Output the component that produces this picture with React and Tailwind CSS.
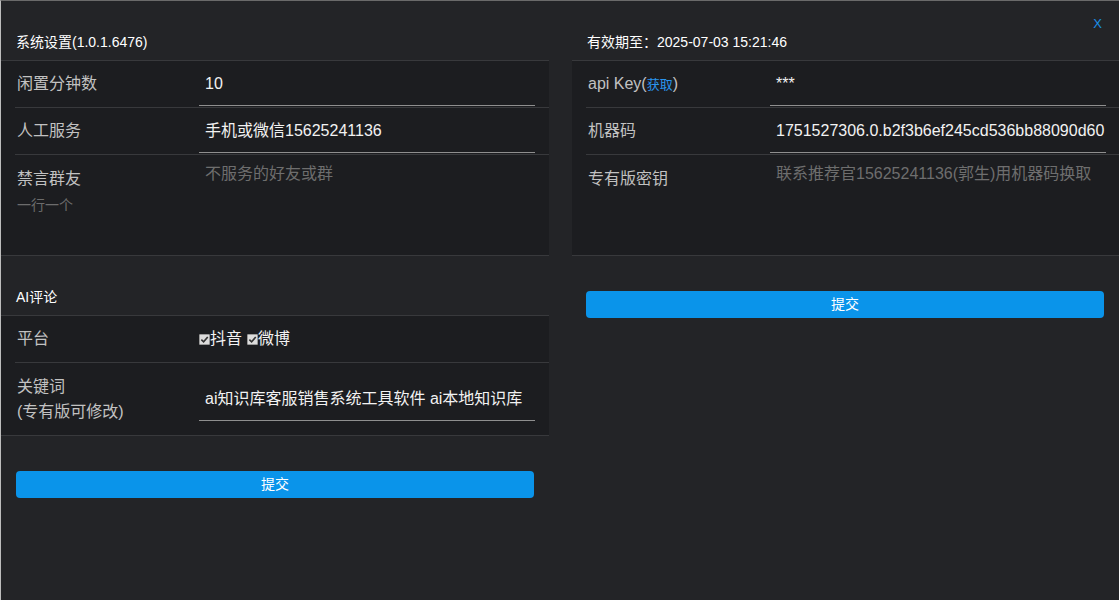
import React from "react";

const FONT = { fontFamily: '"Liberation Sans", "Noto Sans CJK SC", sans-serif' };

function Check() {
  return (
    <span className="inline-flex h-[11px] w-[11px] shrink-0 items-center justify-center rounded-[1px] border border-[#9a9a9a] bg-[#dcdcdc]">
      <svg viewBox="0 0 10 10" className="h-[9px] w-[9px]">
        <path d="M1.5 5.2 L4 7.6 L8.6 2.2" fill="none" stroke="#333" strokeWidth="1.8" />
      </svg>
    </span>
  );
}

function Row({ label, children, last, h = "h-[47px]" }) {
  return (
    <div className={`ml-[14px] flex items-center ${h} ${last ? "" : "border-b border-[#38393c]"}`}>
      <div className="w-[184px] shrink-0 pl-[2px] text-[16px] leading-[24px] text-[#c2c2c2]">{label}</div>
      {children}
    </div>
  );
}

function Input({ children }) {
  return (
    <div className="mr-[15px] flex h-[44px] w-[336px] shrink-0 items-center overflow-hidden whitespace-nowrap border-b border-[#8f8f8f] pl-[6px] text-[16px] text-[#f2f2f2]">
      {children}
    </div>
  );
}

function Header({ children }) {
  return (
    <div className="flex h-[59px] items-end pb-[9px] pl-[15px] text-[14px] leading-[17px] text-white">
      {children}
    </div>
  );
}

export default function App() {
  return (
    <div
      style={FONT}
      className="flex h-[600px] w-[1119px] overflow-hidden border-l border-t border-l-[#bdbdbd] border-t-[#6a6a6a] bg-[#232427]"
    >
      {/* Left column */}
      <div className="flex w-[548px] shrink-0 flex-col">
        <Header>系统设置(1.0.1.6476)</Header>
        <div className="flex h-[196px] flex-col border-y border-[#38393c] bg-[#1c1d20]">
          <Row label="闲置分钟数">
            <div className="self-start pt-[1px]">
              <Input>10</Input>
            </div>
          </Row>
          <Row label="人工服务">
            <div className="self-start pt-[1px]">
              <Input>手机或微信15625241136</Input>
            </div>
          </Row>
          <div className="ml-[14px] flex flex-1">
            <div className="w-[184px] shrink-0 pl-[2px] pt-[12px]">
              <div className="text-[16px] leading-[24px] text-[#c2c2c2]">禁言群友</div>
              <div className="mt-[4px] text-[14px] leading-[20px] text-[#6c6c6c]">一行一个</div>
            </div>
            <div className="pl-[6px] pt-[7px] text-[16px] leading-[24px] text-[#6e6e6e]">不服务的好友或群</div>
          </div>
        </div>

        <Header>AI评论</Header>
        <div className="flex flex-col border-y border-[#38393c] bg-[#1c1d20]">
          <Row label="平台">
            <div className="flex items-center text-[16px] text-[#f2f2f2]">
              <Check />
              <span className="leading-[24px]">抖音</span>
              <span className="w-[5px]" />
              <Check />
              <span className="leading-[24px]">微博</span>
            </div>
          </Row>
          <div className="ml-[14px] flex h-[72px] items-center">
            <div className="w-[184px] shrink-0 pl-[2px] text-[16px] leading-[25px] text-[#c2c2c2]">
              <div>关键词</div>
              <div>(专有版可修改)</div>
            </div>
            <Input>ai知识库客服销售系统工具软件 ai本地知识库</Input>
          </div>
        </div>
        <button className="ml-[15px] mt-[35px] flex h-[27px] w-[518px] items-center justify-center rounded-[4px] bg-[#0a94ea] text-[14px] text-white">
          提交
        </button>
      </div>

      <div className="w-[23px] shrink-0" />

      {/* Right column */}
      <div className="relative flex flex-1 flex-col">
        <button className="absolute right-[19px] top-[14px] text-[13px] leading-[17px] text-[#1a8fe8]">X</button>
        <Header>有效期至：2025-07-03 15:21:46</Header>
        <div className="flex h-[196px] flex-col border-y border-[#38393c] bg-[#1c1d20]">
          <Row
            label={
              <span>
                api Key(<span className="text-[13px] text-[#2a95ee]">获取</span>)
              </span>
            }
          >
            <div className="self-start pt-[1px]">
              <Input>***</Input>
            </div>
          </Row>
          <Row label="机器码">
            <div className="self-start pt-[1px]">
              <Input>1751527306.0.b2f3b6ef245cd536bb88090d60</Input>
            </div>
          </Row>
          <div className="ml-[14px] flex flex-1">
            <div className="w-[184px] shrink-0 pl-[2px] pt-[12px] text-[16px] leading-[24px] text-[#c2c2c2]">专有版密钥</div>
            <div className="whitespace-nowrap pl-[6px] pt-[7px] text-[16px] leading-[24px] text-[#6e6e6e]">
              联系推荐官15625241136(郭生)用机器码换取
            </div>
          </div>
        </div>
        <button className="ml-[14px] mt-[35px] flex h-[27px] w-[518px] items-center justify-center rounded-[4px] bg-[#0a94ea] text-[14px] text-white">
          提交
        </button>
      </div>
    </div>
  );
}
